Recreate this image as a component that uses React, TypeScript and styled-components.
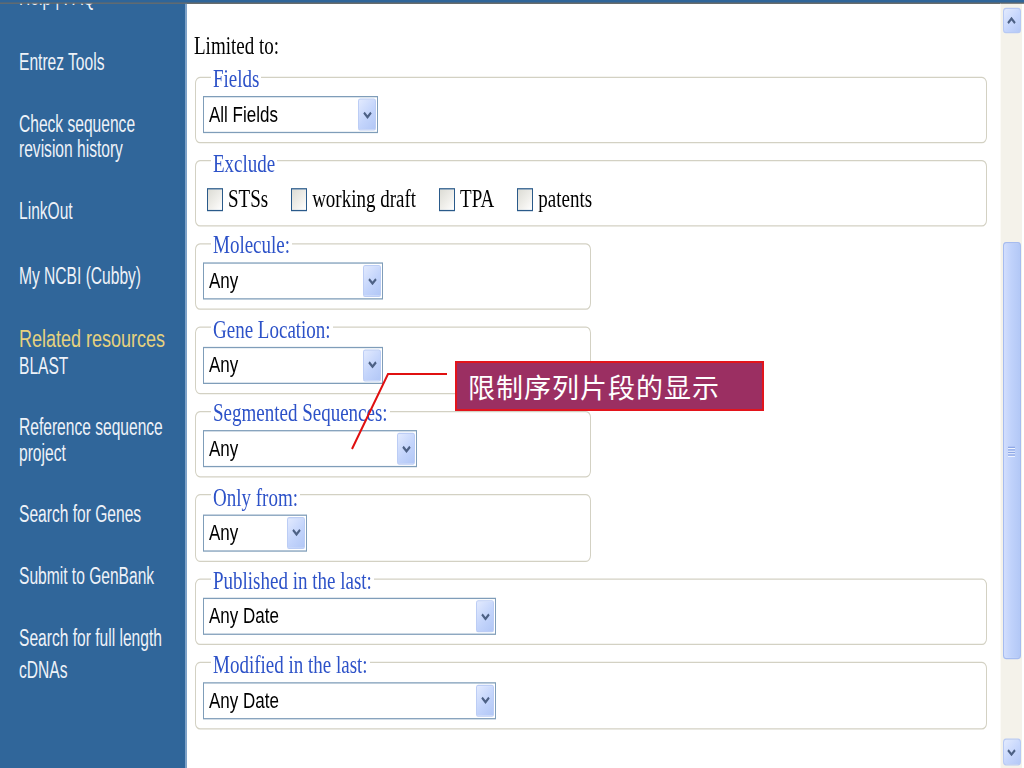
import React from "react";
import styled, { createGlobalStyle } from "styled-components";

// the slide shows a browser screenshot stretched vertically; we lay the page
// out at its natural height and stretch it the same way
const SCALE_Y = 1.28;
const PAGE_H = 600;

const GlobalStyle = createGlobalStyle`
  html, body {
    margin: 0;
    padding: 0;
    overflow: hidden;
    background: #fff;
  }
`;

const Slide = styled.div`
  position: relative;
  width: 1024px;
  height: 768px;
  overflow: hidden;
  background: #fff;
`;

const Screen = styled.div`
  width: 1024px;
  height: ${PAGE_H}px;
  display: flex;
  flex-direction: column;
  transform: scaleY(${SCALE_Y});
  transform-origin: 0 0;
`;

const TopBar = styled.div`
  flex: none;
  height: 2px;
  background: #2f6599;
  border-bottom: 1px solid #6f6b62;
`;

const Body = styled.div`
  flex: 1;
  display: flex;
  min-height: 0;
`;

const Sidebar = styled.nav`
  width: 187px;
  flex: none;
  box-sizing: border-box;
  background: #30669a;
  border-right: 2px solid #7fa3c8;
  overflow: hidden;
  padding-left: 19px;
  display: flex;
  flex-direction: column;
  gap: 28px;
`;

const SideGroup = styled.div<{ $shift?: number; $lh?: number }>`
  margin-top: ${(p) => p.$shift ?? 0}px;
  line-height: ${(p) => p.$lh ?? 20}px;
`;

// the sidebar uses a narrow face; no narrow font is installed, so squeeze it
const SideLink = styled.a`
  display: block;
  width: max-content;
  color: #eef2f8;
  font-family: "Liberation Sans", Arial, sans-serif;
  font-size: 19px;
  text-decoration: none;
  white-space: nowrap;
  transform: scaleX(0.82);
  transform-origin: 0 50%;
`;

const SideHeading = styled.div`
  color: #e6d27e;
  font-family: "Liberation Sans", Arial, sans-serif;
  font-size: 18px;
  line-height: 22px;
  white-space: nowrap;
`;

const Content = styled.main`
  flex: 1;
  min-width: 0;
  overflow: hidden;
  padding: 22px 0 0 8px;
  font-family: "Liberation Serif", "Times New Roman", serif;
`;

const LimitLabel = styled.div`
  font-size: 19px;
  line-height: 22px;
  color: #000;
  margin-left: -1px;
`;

const Group = styled.fieldset<{ $wide?: boolean; $first?: boolean }>`
  box-sizing: border-box;
  width: ${(p) => (p.$wide ? 792 : 396)}px;
  margin: ${(p) => (p.$first ? 2 : 0)}px 0 2.5px 0;
  padding: 0 7px 7px 7px;
  border: 1px solid #d3d1c3;
  border-radius: 5px;
`;

const Legend = styled.legend`
  margin-left: 8px;
  padding: 0 2px;
  font-size: 19px;
  line-height: 22px;
  color: #2d52c8;
  white-space: nowrap;

  span {
    position: relative;
    top: 2px;
  }
`;

const Select = styled.div<{ $w: number }>`
  box-sizing: border-box;
  width: ${(p) => p.$w}px;
  height: 29px;
  margin-top: 4px;
  display: flex;
  align-items: stretch;
  background: #fff;
  border: 1px solid #7f9db9;
`;

const SelectText = styled.span`
  flex: 1;
  padding-left: 5px;
  font-family: "Liberation Sans", Arial, sans-serif;
  font-size: 17px;
  line-height: 28px;
  color: #000;
  white-space: nowrap;
`;

const DropButton = styled.span`
  width: 18px;
  margin: 1px;
  box-sizing: border-box;
  display: flex;
  align-items: center;
  justify-content: center;
  border: 1px solid #bccdf5;
  border-radius: 2px;
  background: linear-gradient(135deg, #e2eafe 0%, #c3d4fb 55%, #b2c7f6 100%);
`;

const Chevron = ({ up = false }: { up?: boolean }) => (
  <svg width="9" height="6" viewBox="0 0 9 6">
    <polyline
      points={up ? "1,5 4.5,1.5 8,5" : "1,1 4.5,4.5 8,1"}
      fill="none"
      stroke="#4d6185"
      strokeWidth="2"
    />
  </svg>
);

const CheckRow = styled.div`
  height: 26px;
  margin-top: 6px;
  display: flex;
  align-items: center;
`;

const CheckItem = styled.label`
  display: flex;
  align-items: center;
  margin-right: 19px;
  font-size: 19px;
  color: #000;
  white-space: nowrap;
`;

const CheckBox = styled.span`
  box-sizing: border-box;
  width: 16px;
  height: 18px;
  margin: 0 5px 0 4px;
  border: 1px solid #2a5a8a;
  background: linear-gradient(135deg, #dcdcd5 0%, #f1f0ec 60%, #ffffff 100%);
`;

const ScrollBar = styled.div`
  width: 22px;
  flex: none;
  box-sizing: border-box;
  padding: 3px 0 2px;
  display: flex;
  flex-direction: column;
  align-items: center;
  background: #f4f2ea;
  border-left: 1px solid #fbfaf6;
`;

const ScrollButton = styled.div<{ $h: number }>`
  box-sizing: border-box;
  width: 18px;
  height: ${(p) => p.$h}px;
  flex: none;
  display: flex;
  align-items: center;
  justify-content: center;
  border: 1px solid #b7c9f4;
  border-radius: 3px;
  background: linear-gradient(135deg, #e3ebfe 0%, #c6d6fc 55%, #b4c8f6 100%);
`;

const Thumb = styled.div`
  box-sizing: border-box;
  width: 18px;
  flex: none;
  display: flex;
  flex-direction: column;
  align-items: center;
  justify-content: center;
  gap: 1px;
  border: 1px solid #a6bcf0;
  border-radius: 3px;
  background: linear-gradient(90deg, #d2defd 0%, #c0d2fb 45%, #b3c8f6 100%);
`;

const GripLine = styled.span`
  width: 7px;
  height: 1px;
  background: #8ea8e6;
  box-shadow: 0 1px 0 #eef3ff;
`;

const Spacer = styled.div`
  flex: 1;
`;

const Edge = styled.div`
  width: 2px;
  flex: none;
  background: #fff;
`;

const Leader = styled.svg`
  position: absolute;
  left: 0;
  top: 0;
  pointer-events: none;
`;

const Callout = styled.div`
  position: absolute;
  left: 455px;
  top: 361px;
  width: 309px;
  height: 50px;
  box-sizing: border-box;
  display: flex;
  align-items: center;
  padding-left: 11px;
  background: #9b2f62;
  border: 2px solid #e3141c;
  color: #fff;
  font-family: "Noto Sans CJK SC", "Noto Sans CJK TC", sans-serif;
  font-size: 27px;
  letter-spacing: 1px;
  white-space: nowrap;
`;

const sideGroups: { lines: string[]; shift?: number; lh?: number; heading?: string }[] = [
  { lines: ["Help | FAQ"], shift: -15.5 },
  { lines: ["Entrez Tools"], shift: 3 },
  { lines: ["Check sequence", "revision history"] },
  { lines: ["LinkOut"] },
  { lines: ["My NCBI (Cubby)"], shift: 3 },
  { heading: "Related resources", lines: ["BLAST"] },
  { lines: ["Reference sequence", "project"] },
  { lines: ["Search for Genes"] },
  { lines: ["Submit to GenBank"] },
  { lines: ["Search for full length", "cDNAs"], shift: -2, lh: 25 },
];

const selects: { legend: string; value: string; width: number; wide?: boolean }[] = [
  { legend: "Molecule:", value: "Any", width: 180 },
  { legend: "Gene Location:", value: "Any", width: 180 },
  { legend: "Segmented Sequences:", value: "Any", width: 214 },
  { legend: "Only from:", value: "Any", width: 104 },
  { legend: "Published in the last:", value: "Any Date", width: 293, wide: true },
  { legend: "Modified in the last:", value: "Any Date", width: 293, wide: true },
];

const excludes = ["STSs", "working draft", "TPA", "patents"];

const Dropdown = ({ value, width }: { value: string; width: number }) => (
  <Select $w={width}>
    <SelectText>{value}</SelectText>
    <DropButton>
      <Chevron />
    </DropButton>
  </Select>
);

const scroll = { top: 163, thumb: 326 };

export default function App() {
  return (
    <Slide>
      <GlobalStyle />
      <Screen>
        <TopBar />
        <Body>
          <Sidebar>
            {sideGroups.map((g, i) => (
              <SideGroup key={i} $shift={g.shift} $lh={g.lh}>
                {g.heading && <SideHeading>{g.heading}</SideHeading>}
                {g.lines.map((l) => (
                  <SideLink key={l} href="#">
                    {l}
                  </SideLink>
                ))}
              </SideGroup>
            ))}
          </Sidebar>

          <Content>
            <LimitLabel>Limited to:</LimitLabel>
            <Group $wide $first>
              <Legend>
                <span>Fields</span>
              </Legend>
              <Dropdown value="All Fields" width={175} />
            </Group>
            <Group $wide>
              <Legend>
                <span>Exclude</span>
              </Legend>
              <CheckRow>
                {excludes.map((e) => (
                  <CheckItem key={e}>
                    <CheckBox />
                    {e}
                  </CheckItem>
                ))}
              </CheckRow>
            </Group>
            {selects.map((s) => (
              <Group key={s.legend} $wide={s.wide}>
                <Legend>
                  <span>{s.legend}</span>
                </Legend>
                <Dropdown value={s.value} width={s.width} />
              </Group>
            ))}
          </Content>

          <ScrollBar>
            <ScrollButton $h={20}>
              <Chevron up />
            </ScrollButton>
            <Thumb style={{ marginTop: scroll.top, height: scroll.thumb }}>
              <GripLine />
              <GripLine />
              <GripLine />
              <GripLine />
            </Thumb>
            <Spacer />
            <ScrollButton $h={21}>
              <Chevron />
            </ScrollButton>
          </ScrollBar>
          <Edge />
        </Body>
      </Screen>

      <Leader width="1024" height="768">
        <polyline points="447,374 388,374 352,449" fill="none" stroke="#e01010" strokeWidth="2" />
      </Leader>
      <Callout>限制序列片段的显示</Callout>
    </Slide>
  );
}
